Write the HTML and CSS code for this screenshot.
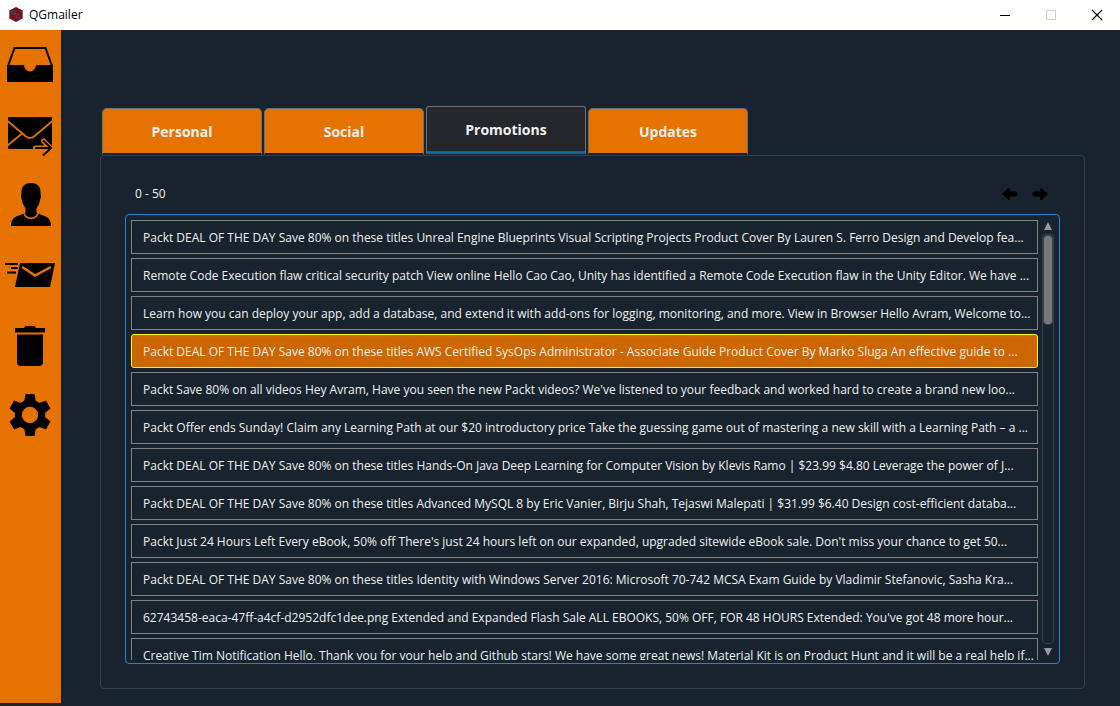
FILE: index.html
```html
<!DOCTYPE html>
<html lang="en">
<head>
<meta charset="utf-8">
<title>QGmailer</title>
<link rel="stylesheet" href="styles.css">
</head>
<body>
<header class="titlebar">
  <svg class="logo" viewBox="0 0 16 16" aria-hidden="true">
    <path fill="#7b1419" d="M8 0l6.700 3.500v8L8 15l-6.700-3.500v-8z"/>
    <g fill="none" stroke="#2f4a80" stroke-width="1"><circle cx="5.500" cy="5.500" r="2"/><path d="M6 6.500l2 1.500M11.500 8a2 2 0 1 0 .5 2.500h-1.500"/></g>
  </svg>
  <span class="app-name">QGmailer</span>
  <div class="window-buttons">
    <button type="button" aria-label="Minimize"><svg viewBox="0 0 12 12"><path d="M1 6.500h10" stroke="#000"/></svg></button>
    <button type="button" aria-label="Maximize" disabled><svg viewBox="0 0 12 12"><path d="M1.500 1.500h9v9h-9z" fill="none" stroke="#ccc"/></svg></button>
    <button type="button" aria-label="Close"><svg viewBox="0 0 12 12"><path d="M1 1l10 10M11 1L1 11" stroke="#000" stroke-width="1.200"/></svg></button>
  </div>
</header>
<div class="shell">
  <nav class="sidebar" aria-label="Mail folders">
    <button type="button" aria-label="Inbox"><svg viewBox="0 0 60 70">
      <path fill="none" stroke="#000" stroke-width="2" d="M8 36l6.500-18h31L52 36"/>
      <path d="M7 35h17a6 6.500 0 0 0 12 0h17v17H7z"/></svg></button>
    <button type="button" aria-label="Sent"><svg viewBox="0 0 60 70">
      <path d="M8 17h44v32H8z"/>
      <path class="cut" stroke-width="1.700" d="M7 20.500l19 16q4 3 8 0l19-16M22 33.500L7 46"/>
      <path class="cut" stroke-width="5" stroke-linecap="round" d="M35.500 48H50M43.500 41l7 7"/>
      <path fill="none" stroke="#000" stroke-width="2" d="M35 48h16M43 40.500l8 7.500-8 7.500"/></svg></button>
    <button type="button" aria-label="Contacts"><svg viewBox="0 0 60 70">
      <path d="M31 13c7 0 10 4 9.500 11 1 1 .5 4-.5 6-.5 4-2 6-3.500 8v5l8 3c4.500 1.500 6.500 5 6.500 10H11c0-5 2-8.500 6.500-10l8-3v-5c-1.500-2-3-4-3.500-8-1-2-1.500-5-.5-6-.5-7 2.500-11 9.500-11z"/>
      <path class="cut" stroke-width="1.700" d="M24 43.500c2.500 6.500 11.500 6.500 14 0"/></svg></button>
    <button type="button" aria-label="Send"><svg viewBox="0 0 60 70">
      <path d="M20 23h35l-5 24H15z"/>
      <path fill="none" stroke="#000" stroke-width="2" d="M5 24h13M11 28h7M7 32.500h9"/>
      <path class="cut" stroke-width="2.500" stroke-linecap="round" d="M23 27.500l12 8 15-8"/></svg></button>
    <button type="button" aria-label="Trash"><svg viewBox="0 0 60 70">
      <path d="M15 18h9l1.500-2h9l1.500 2h9v4.500H15zM17 24.500h26V52q0 4-4 4H21q-4 0-4-4z"/></svg></button>
    <button type="button" aria-label="Settings"><svg viewBox="0 0 60 70">
      <defs><path id="tooth" d="M25.500 14h9l1.500 9H24z"/></defs>
      <circle cx="30" cy="35" r="11.700" fill="none" stroke="#000" stroke-width="7"/>
      <use href="#tooth"/><use href="#tooth" transform="rotate(60 30 35)"/><use href="#tooth" transform="rotate(120 30 35)"/><use href="#tooth" transform="rotate(180 30 35)"/><use href="#tooth" transform="rotate(240 30 35)"/><use href="#tooth" transform="rotate(300 30 35)"/></svg></button>
  </nav>
  <main class="content">
    <div class="tabs" role="tablist">
      <button type="button" class="tab" role="tab">Personal</button>
      <button type="button" class="tab" role="tab">Social</button>
      <button type="button" class="tab selected" role="tab" aria-selected="true">Promotions</button>
      <button type="button" class="tab" role="tab">Updates</button>
    </div>
    <section class="panel" role="tabpanel">
      <div class="pager">
        <span class="range">0 - 50</span>
        <button type="button" aria-label="Previous page"><svg viewBox="0 0 16 14"><path d="M0 7l6.500-6q1.500-.5 1.500 1v2.500h6q1.500 0 1.500 2.500T14 9.500H8V12q0 1.500-1.500 1z"/></svg></button>
        <button type="button" aria-label="Next page"><svg viewBox="0 0 16 14"><path d="M16 7L9.500 1Q8 .5 8 2v2.500H2Q.5 4.500.5 7T2 9.500h6V12q0 1.500 1.500 1z"/></svg></button>
      </div>
      <div class="list">
        <ul class="messages">
          <li>Packt DEAL OF THE DAY Save 80% on these titles Unreal Engine Blueprints Visual Scripting Projects Product Cover By Lauren S. Ferro Design and Develop fea...</li>
          <li>Remote Code Execution flaw critical security patch View online Hello Cao Cao, Unity has identified a Remote Code Execution flaw in the Unity Editor. We have ...</li>
          <li>Learn how you can deploy your app, add a database, and extend it with add-ons for logging, monitoring, and more. View in Browser Hello Avram, Welcome to...</li>
          <li class="current">Packt DEAL OF THE DAY Save 80% on these titles AWS Certified SysOps Administrator - Associate Guide Product Cover By Marko Sluga An effective guide to ...</li>
          <li>Packt Save 80% on all videos Hey Avram, Have you seen the new Packt videos? We've listened to your feedback and worked hard to create a brand new loo...</li>
          <li>Packt Offer ends Sunday! Claim any Learning Path at our $20 introductory price Take the guessing game out of mastering a new skill with a Learning Path – a ...</li>
          <li>Packt DEAL OF THE DAY Save 80% on these titles Hands-On Java Deep Learning for Computer Vision by Klevis Ramo | $23.99 $4.80 Leverage the power of J...</li>
          <li>Packt DEAL OF THE DAY Save 80% on these titles Advanced MySQL 8 by Eric Vanier, Birju Shah, Tejaswi Malepati | $31.99 $6.40 Design cost-efficient databa...</li>
          <li>Packt Just 24 Hours Left Every eBook, 50% off There's just 24 hours left on our expanded, upgraded sitewide eBook sale. Don't miss your chance to get 50...</li>
          <li>Packt DEAL OF THE DAY Save 80% on these titles Identity with Windows Server 2016: Microsoft 70-742 MCSA Exam Guide by Vladimir Stefanovic, Sasha Kra...</li>
          <li>62743458-eaca-47ff-a4cf-d2952dfc1dee.png Extended and Expanded Flash Sale ALL EBOOKS, 50% OFF, FOR 48 HOURS Extended: You've got 48 more hour...</li>
          <li>Creative Tim Notification Hello, Thank you for your help and Github stars! We have some great news! Material Kit is on Product Hunt and it will be a real help if...</li>
        </ul>
        <div class="scrollbar" aria-hidden="true">
          <svg viewBox="0 0 12 12"><path fill="#999" d="M6 2l4 8H2z"/></svg>
          <div class="track"><div class="thumb"></div></div>
          <svg viewBox="0 0 12 12"><path fill="#999" d="M6 10l4-8H2z"/></svg>
        </div>
      </div>
    </section>
  </main>
</div>
</body>
</html>
```

FILE: styles.css
```css
* { box-sizing: border-box; }
body {
  margin: 0;
  height: 100vh;
  display: flex;
  flex-direction: column;
  background: #19232d;
  color: #f0f0f0;
  font: 12px/16px "Open Sans", "Noto Sans", sans-serif;
}
button {
  padding: 0;
  border: 0;
  background: none;
  font: inherit;
  color: inherit;
}
svg { display: block; }
.titlebar {
  flex: none;
  height: 30px;
  display: flex;
  align-items: center;
  padding-left: 8px;
  background: #fff;
  color: #000;
}
.logo { width: 16px; height: 16px; }
.app-name { margin-left: 5px; }
.window-buttons { display: flex; margin-left: auto; }
.window-buttons button {
  width: 46px;
  height: 28px;
  display: grid;
  place-items: center;
}
.window-buttons svg { width: 12px; height: 12px; }
.shell {
  flex: 1;
  min-height: 0;
  display: flex;
}
.sidebar {
  flex: none;
  width: 61px;
  margin-bottom: 3px;
  background: #e67300;
}
.sidebar button { display: block; width: 60px; height: 70px; }
.sidebar svg { width: 60px; height: 70px; }
.cut { fill: none; stroke: #e67300; }
.content {
  flex: 1;
  min-width: 0;
  display: flex;
  flex-direction: column;
  padding: 76px 35px 17px 39px;
}
.tabs {
  display: flex;
  align-items: flex-end;
  gap: 2px;
  height: 49px;
  padding-left: 2px;
}
.tab {
  width: 160px;
  height: 47px;
  padding-top: 2px;
  border: 1px solid #6b7275;
  border-bottom: 2px solid #19232d;
  border-radius: 5px 5px 0 0;
  background: #e67300;
  font-size: 14px;
  font-weight: 700;
}
.tab.selected {
  align-self: flex-start;
  height: 48px;
  border-bottom: 3px solid #1464a0;
  border-radius: 3px 3px 0 0;
  background: #25272c;
}
.panel {
  flex: 1;
  min-height: 0;
  display: flex;
  flex-direction: column;
  padding: 26px 24px 24px;
  border: 1px solid #32414b;
  border-radius: 4px;
}
.pager {
  display: flex;
  align-items: center;
  gap: 14px;
  height: 24px;
  margin-bottom: 8px;
  padding: 0 12px 0 10px;
}
.range { margin-right: auto; }
.pager svg { width: 16px; height: 14px; }
.list {
  flex: 1;
  min-height: 0;
  display: flex;
  gap: 4px;
  padding: 3px 5px 3px 5px;
  border: 1px solid #1f86cc;
  border-radius: 4px;
}
.messages {
  flex: 1;
  min-width: 0;
  margin: 0;
  padding: 2px 0 0;
  list-style: none;
  overflow: hidden;
}
.messages li {
  height: 34px;
  margin-bottom: 4px;
  padding: 0 11px;
  border: 1px solid #828282;
  line-height: 34px;
  white-space: nowrap;
  overflow: hidden;
}
.messages .current {
  border-color: #ff0;
  border-radius: 3px;
  background: #cc6600;
}
.scrollbar {
  flex: none;
  width: 12px;
  display: flex;
  flex-direction: column;
  padding: 2px 0;
}
.scrollbar svg { width: 12px; height: 12px; }
.track {
  flex: 1;
  margin: 2px 0;
  border: 1px solid #32414b;
  border-radius: 4px;
}
.thumb {
  height: 22%;
  border: 1px solid #32414b;
  border-radius: 4px;
  background: #787878;
}
```
